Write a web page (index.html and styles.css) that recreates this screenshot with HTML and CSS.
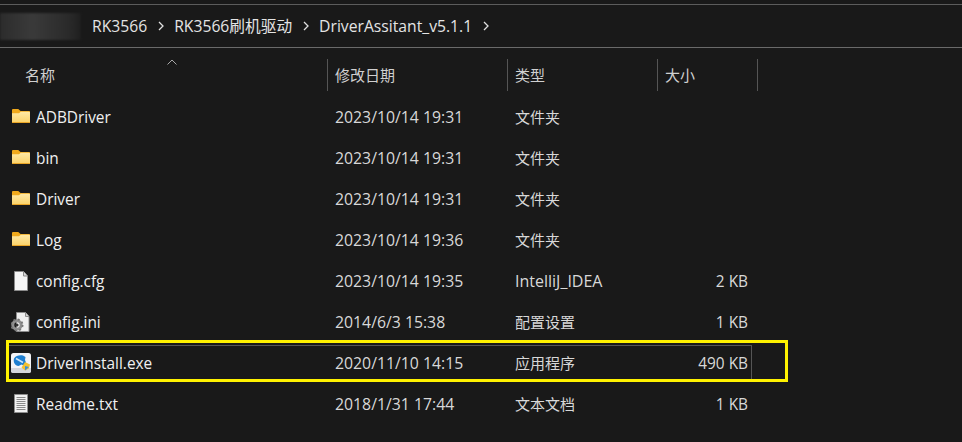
FILE: index.html
```html
<!DOCTYPE html>
<html lang="zh-CN">
<head>
<meta charset="utf-8">
<title>DriverAssitant_v5.1.1</title>
<link rel="stylesheet" href="styles.css">
</head>
<body>
<svg width="0" height="0" class="defs">
  <defs>
    <linearGradient id="fold" x1="0" y1="0" x2="0" y2="1"><stop offset="0" stop-color="#ffe9a6"/><stop offset="1" stop-color="#fbd267"/></linearGradient>
    <symbol id="folder" viewBox="0 0 18 14">
      <path d="M0 1.2C0 .5.5 0 1.2 0h4.600c.4 0 .7.1 1 .4L8.600 2H17c.6 0 1 .4 1 1v2H0z" fill="#f0a91c"/>
      <path d="M0 4.200h7l1.800-1.400H17c.6 0 1 .4 1 1V13c0 .6-.4 1-1 1H1c-.6 0-1-.4-1-1z" fill="url(#fold)"/>
      <path d="M0 13h18c0 .6-.4 1-1 1H1c-.6 0-1-.4-1-1z" fill="#eaa526"/>
    </symbol>
  </defs>
</svg>
<main class="window">
  <nav class="crumbs">
    <div class="blurred"></div>
    <span class="crumb">RK3566</span>
    <svg class="chev" viewBox="0 0 6 10"><path d="M1 1l4 4-4 4"/></svg>
    <span class="crumb">RK3566刷机驱动</span>
    <svg class="chev" viewBox="0 0 6 10"><path d="M1 1l4 4-4 4"/></svg>
    <span class="crumb">DriverAssitant_v5.1.1</span>
    <svg class="chev" viewBox="0 0 6 10"><path d="M1 1l4 4-4 4"/></svg>
  </nav>
  <section class="listing">
    <header class="head">
      <div class="hcell hname">名称<svg class="caret" viewBox="0 0 10 6"><path d="M.5 5.500L5 1l4.500 4.500"/></svg></div>
      <div class="hcell hdate">修改日期</div>
      <div class="hcell htype">类型</div>
      <div class="hcell hsize">大小</div>
    </header>
    <div class="rows">
      <div class="row"><div class="name"><svg class="ico folder"><use href="#folder"/></svg>ADBDriver</div><div class="date">2023/10/14 19:31</div><div class="type">文件夹</div><div class="size"></div></div>
      <div class="row"><div class="name"><svg class="ico folder"><use href="#folder"/></svg>bin</div><div class="date">2023/10/14 19:31</div><div class="type">文件夹</div><div class="size"></div></div>
      <div class="row"><div class="name"><svg class="ico folder"><use href="#folder"/></svg>Driver</div><div class="date">2023/10/14 19:31</div><div class="type">文件夹</div><div class="size"></div></div>
      <div class="row"><div class="name"><svg class="ico folder"><use href="#folder"/></svg>Log</div><div class="date">2023/10/14 19:36</div><div class="type">文件夹</div><div class="size"></div></div>
      <div class="row"><div class="name"><svg class="ico" viewBox="0 0 20 20"><path d="M3.500 .5h9l4 4.500v14.500h-13z" fill="#f5f5f5" stroke="#8a8a8a"/><path d="M12.500 .5v4.500h4" fill="#d8d8d8" stroke="#8a8a8a"/></svg>config.cfg</div><div class="date">2023/10/14 19:35</div><div class="type latin">IntelliJ_IDEA</div><div class="size">2 KB</div></div>
      <div class="row"><div class="name"><svg class="ico" viewBox="0 0 20 20"><path d="M5.500 .5h9l3.500 4v15H5.500z" fill="#efefef" stroke="#8c8c8c"/><path d="M14.500 .5v4h3.500" fill="#d0d0d0" stroke="#8c8c8c"/><circle cx="6" cy="13" r="4.200" fill="none" stroke="#8f8f8f" stroke-width="3"/><circle cx="6" cy="13" r="5.600" fill="none" stroke="#777" stroke-width="1.800" stroke-dasharray="2 2.400"/><circle cx="6" cy="13" r="1.600" fill="#333"/></svg>config.ini</div><div class="date">2014/6/3 15:38</div><div class="type">配置设置</div><div class="size">1 KB</div></div>
      <div class="row selected"><div class="name"><svg class="ico" viewBox="0 0 20 20"><rect width="20" height="20" rx="2.500" fill="#f4f4f6"/><path d="M0 15h20v2.500A2.500 2.500 0 0 1 17.500 20h-15A2.500 2.500 0 0 1 0 17.500z" fill="#d4d6dc"/><path d="M3 5.500C4.500 2.500 9 1.800 12 2.500l2.500 1.500-.5 3 1 2.500-2.500 3-2-1-3 1.500C4 13 2 9 3 5.500z" fill="#1f7fd0"/><path d="M5 5.500l7 4" stroke="#cfe6f8" stroke-width="1.500"/><path d="M14 9l5 2.500-1 4-4 2-3.500-3z" fill="#f5c12e"/><path d="M14 13l4 1-4 3.500z" fill="#3b8fd8"/></svg>DriverInstall.exe</div><div class="date">2020/11/10 14:15</div><div class="type">应用程序</div><div class="size">490 KB</div></div>
      <div class="row"><div class="name"><svg class="ico" viewBox="0 0 20 20"><path d="M3.500 .5h13v18h-13z" fill="#f2f2f2" stroke="#8e8e8e"/><path d="M5.500 3.500h9M5.500 5.500h9M5.500 7.500h9M5.500 9.500h9M5.500 11.500h9M5.500 13.500h9M5.500 15.500h9" stroke="#8a8a8a"/></svg>Readme.txt</div><div class="date">2018/1/31 17:44</div><div class="type">文本文档</div><div class="size">1 KB</div></div>
    </div>
  </section>
  <div class="highlight"></div>
</main>
</body>
</html>
```
FILE: styles.css
```css
* { box-sizing: border-box; }
html, body { margin: 0; height: 100%; background: #191919; }
body { overflow: hidden; }
.defs { position: absolute; }
.window {
  position: relative;
  width: 962px;
  height: 442px;
  padding-top: 4px;
  font-family: "Open Sans", "Noto Sans CJK SC", sans-serif;
  font-size: 15.400px;
  color: #e4e4e4;
}
.crumbs {
  display: flex;
  align-items: center;
  height: 44px;
  border-top: 1px solid #5c5c5c;
  border-bottom: 1px solid #6a6a6a;
}
.blurred {
  width: 81px;
  height: 27px;
  margin-right: 11px;
  background: linear-gradient(90deg, #2c2c2c, #3a3a3a 40%, #2a2a2a 85%, #1f1f1f);
  filter: blur(1px);
}
.crumb { line-height: 20px; font-size: 15.700px; }
.chev {
  width: 6px;
  height: 10px;
  margin: 0 10px 0 11px;
  fill: none;
  stroke: #e0e0e0;
  stroke-width: 1.300;
}
.head {
  display: grid;
  grid-template-columns: 328px 180px 150px 100px;
  margin-top: 11px;
  height: 32px;
  font-size: 15px;
}
.hcell {
  display: flex;
  align-items: center;
  padding-left: 7px;
  padding-bottom: 2px;
  border-right: 1px solid #555;
  color: #d0d0d0;
}
.hname { position: relative; padding-left: 25px; }
.caret {
  position: absolute;
  left: 167px;
  top: 0;
  width: 10px;
  height: 6px;
  fill: none;
  stroke: #a8a8a8;
}
.rows {
  display: flex;
  flex-direction: column;
  gap: 5px;
  margin-top: 8px;
}
.row {
  display: grid;
  grid-template-columns: 319px 180px 150px 95px;
  align-items: center;
  width: 744px;
  height: 36px;
  margin-left: 8px;
  border: 1px solid transparent;
}
.row.selected { border-color: #555; }
.name { display: flex; align-items: center; gap: 5px; padding-left: 2px; color: #f0f0f0; }
.date, .type { padding-left: 7px; color: #d8d8d8; }
.date { font-size: 15.800px; }
.type { font-size: 15px; padding-bottom: 2px; }
.type.latin { font-size: 16px; padding-bottom: 0; }
.size { padding-right: 5px; text-align: right; color: #d8d8d8; }
.ico { width: 20px; height: 20px; flex: none; }
.ico.folder { width: 18px; height: 14px; margin: 0 1px 3px 1px; }
.highlight {
  position: absolute;
  left: 6px;
  top: 340px;
  width: 782px;
  height: 42px;
  border: 3px solid #fff200;
}
```
